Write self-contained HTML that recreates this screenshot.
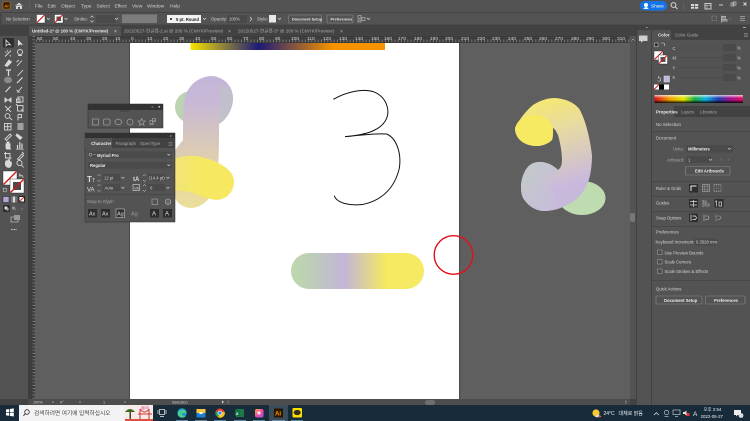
<!DOCTYPE html>
<html><head><meta charset="utf-8"><style>
html,body{margin:0;padding:0;width:750px;height:421px;overflow:hidden;background:#535353}
svg{display:block;filter:blur(.3px)}
text{font-family:"Liberation Sans","Noto Sans CJK KR",sans-serif;font-size:4.8px;fill:#d4d4d4}
.b{font-weight:bold;fill:#e8e8e8}
.d{fill:#a8a8a8}
.i{fill:none;stroke:#d8d8d8;stroke-width:.9}
.f{fill:#d8d8d8}
.ib{fill:#2e2e2e}
.btn{fill:#535353;stroke:#8a8a8a;stroke-width:.6}
</style></head><body>
<svg xmlns="http://www.w3.org/2000/svg" width="750" height="421" viewBox="0 0 750 421">
<defs>
<pattern id="rx" width="3.2" height="7" patternUnits="userSpaceOnUse"><rect width="3.2" height="7" fill="#3d3d3d"/><rect x="1" y="4.5" width=".7" height="2.5" fill="#8f8f8f"/></pattern>
<pattern id="ry" width="7" height="3.2" patternUnits="userSpaceOnUse"><rect width="7" height="3.2" fill="#3d3d3d"/><rect x="4.5" y="1" width="2.5" height=".7" fill="#8f8f8f"/></pattern>
<linearGradient id="bar"><stop offset="0" stop-color="#f8e400"/><stop offset=".35" stop-color="#1c1a78"/><stop offset=".73" stop-color="#f59300"/><stop offset="1" stop-color="#f59300"/></linearGradient>
<linearGradient id="pill"><stop offset="0" stop-color="#bdd8ae"/><stop offset=".12" stop-color="#bdd0b4"/><stop offset=".4" stop-color="#c3b5d8"/><stop offset=".72" stop-color="#f6ea62"/><stop offset="1" stop-color="#f6ea62"/></linearGradient>
<linearGradient id="lp" x1="0" y1="0" x2="0" y2="1"><stop offset="0" stop-color="#c4b6d9"/><stop offset=".2" stop-color="#c7b8d6"/><stop offset=".65" stop-color="#e0d0ac"/><stop offset="1" stop-color="#ecdf98"/></linearGradient>
<linearGradient id="ly" x1="0" y1="0" x2="1" y2="0"><stop offset="0" stop-color="#f0e37c"/><stop offset=".5" stop-color="#f6e961"/></linearGradient>
<linearGradient id="lg" x1="0" y1="0" x2="1" y2="0"><stop offset="0" stop-color="#bdd6ae"/><stop offset="1" stop-color="#bcc4c6"/></linearGradient>
<linearGradient id="rs" x1=".35" y1="0" x2=".55" y2="1"><stop offset="0" stop-color="#f5e870"/><stop offset=".3" stop-color="#e8dba0"/><stop offset=".8" stop-color="#c9b9dd"/><stop offset="1" stop-color="#c5b9d8"/></linearGradient>
<linearGradient id="rb" x1="0" y1="0" x2="1" y2="1"><stop offset="0" stop-color="#c3cbc8"/><stop offset="1" stop-color="#c8badc"/></linearGradient>
<linearGradient id="spec"><stop offset="0" stop-color="#d8101c"/><stop offset=".17" stop-color="#f0a000"/><stop offset=".33" stop-color="#e8e800"/><stop offset=".45" stop-color="#20b040"/><stop offset=".58" stop-color="#10b0e0"/><stop offset=".72" stop-color="#2040b0"/><stop offset=".85" stop-color="#a01090"/><stop offset="1" stop-color="#e01060"/></linearGradient>
<linearGradient id="specv" x1="0" y1="0" x2="0" y2="1"><stop offset="0" stop-color="#fff" stop-opacity=".75"/><stop offset=".4" stop-color="#fff" stop-opacity="0"/><stop offset=".6" stop-color="#000" stop-opacity="0"/><stop offset="1" stop-color="#000" stop-opacity=".9"/></linearGradient>
<linearGradient id="ph" x1="0" y1="0" x2="1" y2="1"><stop offset="0" stop-color="#ffb13b"/><stop offset=".5" stop-color="#f5479c"/><stop offset="1" stop-color="#8b5cf6"/></linearGradient>
</defs>

<!-- base -->
<rect width="750" height="421" fill="#535353"/>
<!-- title bar / menu -->
<rect x="0" y="12" width="750" height=".7" fill="#3e3e3e"/>
<rect x="3" y="2" width="7" height="7" rx=".8" fill="#2c1500" stroke="#d67a10" stroke-width=".6"/>
<text x="4.2" y="7.4" style="font-size:4.4px;fill:#ff9a00;font-weight:bold">Ai</text>
<path d="M15 6 L19 2.6 L23 6 M16 5.5 V9 H18 V7 H20 V9 H22 V5.5" fill="#d8d8d8"/>
<rect x="29" y="2" width=".6" height="8" fill="#6a6a6a"/>
<text x="35" y="7.4">File</text><text x="47.5" y="7.4">Edit</text><text x="61" y="7.4">Object</text><text x="81" y="7.4">Type</text><text x="96.5" y="7.4">Select</text><text x="114.5" y="7.4">Effect</text><text x="132" y="7.4">View</text><text x="147" y="7.4">Window</text><text x="170" y="7.4">Help</text>
<rect x="640" y="1" width="27" height="9.5" rx="4.7" fill="#1473e6"/>
<circle cx="646" cy="5" r="2" fill="#fff"/><path d="M643.5 9 C644 6.5 648 6.5 648.5 9Z" fill="#fff"/>
<text x="651" y="7.6" style="fill:#fff">Share</text>
<circle cx="673.5" cy="5" r="2.4" class="i" style="stroke-width:1"/><path d="M675.3 6.8 L677.5 9" class="i" style="stroke-width:1"/>
<rect x="683" y="2" width=".6" height="8" fill="#6a6a6a"/>
<path d="M691 4h3.2v2h-3.2zM691 6.7h3.2v2h-3.2zM695 4h3.2v2h-3.2zM695 6.7h3.2v2h-3.2z" fill="#d8d8d8"/>
<rect x="705" y="3.5" width="6" height="5.5" class="i"/><path d="M705 5.2h6M707 5.2v3.8" class="i" style="stroke-width:.5"/>
<path d="M719 5h4" class="i"/><rect x="731" y="3" width="3" height="3" class="i" style="stroke-width:.6"/><rect x="733" y="2" width="3" height="3" class="i" style="stroke-width:.6"/>
<path d="M743.5 2.5l3 3m0-3l-3 3" class="i"/>

<!-- control bar -->
<rect x="0" y="13" width="750" height="12" fill="#535353"/>
<rect x="0" y="24.7" width="750" height=".6" fill="#3e3e3e"/>
<rect x="0" y="13" width="1.5" height="12" fill="#444"/>
<text x="6" y="20.6" style="font-size:4.2px">No Selection</text>
<rect x="36.5" y="14.5" width="8.5" height="8.5" fill="#fff" stroke="#222" stroke-width=".4"/><path d="M37 22.5 L44.5 15" stroke="#d01818" stroke-width="1.2"/>
<path d="M46.8 18 l1.5 1.5 1.5-1.5" class="i" style="stroke-width:.7"/>
<rect x="54.5" y="14.5" width="8.5" height="8.5" fill="#fff" stroke="#222" stroke-width=".4"/><rect x="56.5" y="16.5" width="4.5" height="4.5" fill="#535353"/><path d="M55 22.5 L62.5 15" stroke="#d01818" stroke-width="1.2"/>
<path d="M64.5 18 l1.5 1.5 1.5-1.5" class="i" style="stroke-width:.7"/>
<text x="74" y="20.6" style="font-size:4.4px">Stroke:</text>
<path d="M90.5 17.5l1.5-1.7 1.5 1.7M90.5 20.5l1.5 1.7 1.5-1.7" class="i" style="stroke-width:.6"/>
<rect x="96" y="15" width="20" height="8" fill="#4a4a4a"/>
<path d="M115 18 l1.5 1.5 1.5-1.5" class="i" style="stroke-width:.7"/>
<rect x="122" y="14.5" width="35" height="8.5" fill="#7d7d7d"/>
<rect x="167" y="15" width="34" height="8" fill="#f2f2f2"/>
<circle cx="171" cy="19" r="1" fill="#111"/>
<text x="176" y="20.8" style="font-size:4.2px;fill:#222;font-weight:bold">5 pt. Round</text>
<path d="M203 18 l1.5 1.5 1.5-1.5" class="i" style="stroke-width:.7"/>
<text x="211" y="20.6" style="font-size:4.4px">Opacity:</text>
<rect x="227" y="15" width="20" height="8" fill="#4a4a4a"/>
<text x="229" y="20.6" style="font-size:4.2px">100%</text>
<path d="M250 17l1.8 2-1.8 2" class="i" style="stroke-width:.7"/>
<text x="257" y="20.6" style="font-size:4.4px">Style:</text>
<rect x="269" y="15" width="7" height="7.5" fill="#e8e8e8"/>
<path d="M278 18 l1.5 1.5 1.5-1.5" class="i" style="stroke-width:.7"/>
<rect x="288.5" y="15" width="33" height="8" rx="1" class="btn"/><text x="292" y="20.6" style="font-size:3.8px" class="b">Document Setup</text>
<rect x="327" y="15" width="26" height="8" rx="1" class="btn"/><text x="330.5" y="20.6" style="font-size:3.8px" class="b">Preferences</text>
<path d="M358 15.5h3v3h-3zM362 17.5h3v3h-3zM358 20h3v2h-3z" fill="none" stroke="#ccc" stroke-width=".6"/>
<path d="M367 18 l1.5 1.5 1.5-1.5" class="i" style="stroke-width:.7"/>
<rect x="712" y="16" width="4.5" height="4.5" fill="none" stroke="#aaa" stroke-width=".5" stroke-dasharray="1 .7"/>
<path d="M721.5 15.5v7M722.5 16.5h3v1.5h-3zM722.5 19.5h4.5v1.5h-4.5z" fill="none" stroke="#ccc" stroke-width=".7"/>
<path d="M729 18l1.2 1.2 1.2-1.2" stroke="#888" stroke-width=".5" fill="none"/>
<path d="M740 16.5h5M740 18.5h5M740 20.5h5" stroke="#aaa" stroke-width=".8"/>

<!-- tabs -->
<rect x="0" y="25" width="750" height="12" fill="#424242"/>
<rect x="29" y="26" width="92" height="10" fill="#535353"/>
<text x="32" y="32.5" style="font-size:4.4px" class="b">Untitled-1* @ 100 % (CMYK/Preview)</text>
<text x="114" y="32.8" style="font-size:5px;fill:#ddd">×</text>
<text x="124" y="32.5" class="d" style="font-size:4.6px">20220527-한글캡-2.ai @ 200 % (CMYK/Preview)</text>
<text x="228" y="32.8" style="font-size:5px;fill:#bbb">×</text>
<text x="238" y="32.5" class="d" style="font-size:4.6px">20220527-한글캡-3* @ 200 % (CMYK/Preview)</text>
<text x="340" y="32.8" style="font-size:5px;fill:#bbb">×</text>

<!-- rulers -->
<rect x="28" y="36" width="601" height="7" fill="url(#rx)"/>
<rect x="28" y="36" width="7" height="363" fill="url(#ry)"/>
<g class="d" style="font-size:3.5px">
<text x="37" y="40">60</text><text x="53" y="40">50</text><text x="70" y="40">40</text><text x="86" y="40">30</text><text x="102" y="40">20</text><text x="115" y="40">10</text><text x="131" y="40">0</text><text x="147" y="40">10</text><text x="163" y="40">20</text><text x="179" y="40">30</text><text x="195" y="40">40</text><text x="211" y="40">50</text><text x="227" y="40">60</text><text x="243" y="40">70</text><text x="259" y="40">80</text><text x="275" y="40">90</text><text x="291" y="40">100</text><text x="307" y="40">110</text><text x="323" y="40">120</text><text x="339" y="40">130</text><text x="355" y="40">140</text><text x="371" y="40">150</text><text x="384" y="40">160</text><text x="398" y="40">170</text><text x="414" y="40">180</text><text x="430" y="40">190</text><text x="445" y="40">200</text><text x="461" y="40">210</text><text x="477" y="40">220</text><text x="492" y="40">230</text><text x="508" y="40">240</text><text x="524" y="40">250</text><text x="539" y="40">260</text><text x="555" y="40">270</text><text x="571" y="40">280</text><text x="586" y="40">290</text><text x="602" y="40">300</text><text x="617" y="40">310</text>
</g>

<!-- canvas -->
<rect x="35" y="43" width="595" height="356" fill="#5f5f5f"/>
<rect x="130" y="43" width="329" height="356" fill="#fff"/>
<rect x="459" y="43" width="1.2" height="356" fill="#4b4b4b"/>
<rect x="129" y="43" width="1" height="356" fill="#4b4b4b"/>
<rect x="190.5" y="43" width="194.5" height="7" fill="url(#bar)"/>

<!-- left art -->
<circle cx="191" cy="107" r="16" fill="url(#lg)"/>
<path d="M183 140 C183 120 183 108 185 97 C189 84 200 76 212 76 C225 77 233 87 233 98 C233 110 226 120 219 124 C219 140 219 155 218 167 C216 182 214 192 210 197 C204 205 197 208 190 208 C182 207 176 202 175 197 L175 150Z" fill="url(#lp)"/>
<path d="M218 84 C228 88 233 92 233 98 C233 110 226 120 219 124 C220 110 222 95 218 84Z" fill="#bfc2c8" opacity=".75"/>
<path d="M170 160 C178 157 187 155 195 156 C205 157 215 161 222 165 C230 170 234 175 234 182 C234 193 225 200 216 200 C208 199 198 195 190 192 C184 191 176 190 170 192Z" fill="url(#ly)"/>

<!-- 3 -->
<g transform="translate(170 40) scale(.3333)"><path d="M490 178 C530 155 580 145 610 155 C650 170 660 210 650 235 C635 270 590 285 525 290 C570 285 620 280 650 282 C680 295 695 340 688 385 C675 440 640 480 580 493 C540 498 500 490 493 467" fill="none" stroke="#111" stroke-width="3"/></g>

<!-- pill -->
<rect x="291" y="253" width="133" height="36" rx="18" fill="url(#pill)"/>
<circle cx="453.5" cy="255" r="19.3" fill="none" stroke="#e3101a" stroke-width="1.4"/>

<!-- right art -->
<ellipse cx="582" cy="198" rx="23.5" ry="17" fill="#bfdcb0"/>
<path d="M515 128 C520 118 527 110 533 105 C541 100 548 98 555 98 C568 99 576 104 580 110 C587 124 590 140 592 155 C592 168 590 178 587 185 C581 197 574 202 567 205 C558 210 550 211 543 211 C533 210 527 204 523 198 C521 193 521 189 521 185 C522 175 526 168 530 165 C534 162 538 162 542 162 C549 163 554 166 558 170 C561 168 562 164 562 160 C562 152 560 142 558 135 C556 131 555 129 553 128 C553 133 553 137 552 140 C548 144 542 146 537 146 C530 146 524 144 520 140 C517 137 515 133 515 128Z" fill="url(#rs)"/>
<path d="M521 185 C522 175 526 168 530 165 C534 162 538 162 542 162 C549 163 554 166 558 170 C554 176 548 178 545 180 C552 190 556 200 560 208 C554 210 549 211 543 211 C533 210 527 204 523 198 C521 193 521 189 521 185Z" fill="url(#rb)"/>
<path d="M515 128 C518 119 524 116 533 115 C545 114 551 122 553 128 C553 133 553 137 552 140 C548 144 542 146 537 146 C530 146 524 144 520 140 C517 137 515 133 515 128Z" fill="#f6ea62"/>

<!-- left tools -->
<rect x="0" y="36" width="28" height="363" fill="#535353"/>
<rect x="3" y="38" width="11" height="9.5" rx="1" fill="#2e2e2e"/>
<path d="M6 40 L6 46 L7.7 44.5 L10.5 45 Z" fill="none" stroke="#e8e8e8" stroke-width=".8"/>
<path d="M18 39.5 L18 46 L20 44.5 L23 45 Z" fill="#e0e0e0"/>
<g class="i">
<path d="M5 56.5 L11 50.5 M7 50.5 l1 1 M5 52 l1.5 .5 M10 55 l.5 1.5"/><circle cx="20" cy="52" r="2.5"/><path d="M18 55.5 h4"/>
<path d="M5 65.5 L9 60 L11.5 62 L7 66.5Z" fill="#d8d8d8"/><path d="M17 66 L22 60.5 M16.5 62 L19 60"/>
<path d="M6 70h5M8.5 70v6" style="stroke-width:1.3"/><path d="M17.5 76 L23 70"/>
<ellipse cx="8" cy="80" rx="3.6" ry="2.8" fill="#8a8a8a" stroke="#8a8a8a"/><path d="M17 83 L22.5 77.5" style="stroke-width:1.2"/>
<path d="M5.5 92 L10.5 86.5"  style="stroke-width:1.2"/><path d="M17.5 92.5 L22 87 M16.5 90l3 2.5"/>
<path d="M5 98l2.5 2-2.5 2zM11 98l-2.5 2 2.5 2z" fill="#d8d8d8"/><rect x="18" y="97" width="5" height="5"/><rect x="16.5" y="99" width="3.5" height="3.5"/>
<path d="M5 106 l3 3 3-3 M6 111 l2-2 3 3" /><rect x="17.5" y="105.5" width="5.5" height="5.5"/><path d="M16 104l2 2M23.5 111.5l-2-2"/>
<circle cx="7.5" cy="116" r="2.4"/><path d="M10 118l2 2"/><path d="M18 114.5v6M18 114.5h3.5v3.2h-3.5"/>
<rect x="4.5" y="123.5" width="6.5" height="6.5"/><path d="M7.7 123.5v6.5M4.5 126.7h6.5"/><rect x="17.5" y="123" width="6" height="7" fill="#a0a0a0" stroke="none"/>
<path d="M5 139 L10 134 l1.5 1.5 L6.5 140.5 Z"/><path d="M17 134l5 3.5-2 2-4-4z" fill="#d8d8d8"/>
<path d="M6 148v-4h4v4zM7 144v-2h2v2M11 149h-5" fill="#d8d8d8"/><path d="M17.5 149v-4M19.8 149v-7M22 149v-5.5" style="stroke-width:1.2"/><path d="M16 149.5h8" style="stroke-width:.5"/>
<path d="M5.5 152v6h6M4 153.5h6v6"/><path d="M17.5 159 l4.5-5 1.5 1.5-4.5 4.5z M22 152l2 2"/>
<path d="M5.5 165 C5 160 7 160 7.5 162 L8 160 C9 159 10 160 9.7 162 C11 161.5 12 162 11.2 165 C10.5 168 7 168.5 5.5 165Z" fill="#d8d8d8"/><circle cx="19.5" cy="163" r="2.6"/><path d="M21.5 165l2 2.4"/>
</g>
<rect x="3" y="171" width="14" height="14" fill="#fff" stroke="#222" stroke-width=".4"/>
<path d="M3.5 184.5 L16.5 171.5" stroke="#d01818" stroke-width="1.3"/>
<rect x="10" y="179" width="14" height="14" fill="#fff" stroke="#222" stroke-width=".4"/>
<rect x="13" y="182" width="8" height="8" fill="#4a4a4a"/>
<path d="M10.5 192.5 L23.5 179.5" stroke="#d01818" stroke-width="1.3"/>
<path d="M20 175 a2.5 2.5 0 0 1 3 3 M19.5 173.5v2.5h2" class="i" style="stroke-width:.7"/>
<rect x="3" y="188" width="3.5" height="3.5" fill="#e8e8e8"/><circle cx="5" cy="190" r="2" fill="#555" stroke="#ddd" stroke-width=".5"/>
<rect x="3" y="196.5" width="6" height="6" fill="#b3a5d8" stroke="#222" stroke-width=".5"/>
<rect x="11" y="196.5" width="6" height="6" fill="#777"/><rect x="13" y="196.5" width="2" height="6" fill="#ddd"/>
<rect x="18.5" y="196" width="6.5" height="6.5" fill="#222"/><rect x="19.5" y="197" width="4.5" height="4.5" fill="#fff"/><path d="M19.5 201.5L24 197" stroke="#d01818" stroke-width="1"/>
<rect x="3" y="205" width="7" height="7" rx="1" fill="#2e2e2e"/><circle cx="6" cy="208" r="1.6" fill="#ddd"/><circle cx="7.5" cy="209.3" r="1.3" fill="#aaa"/>
<circle cx="13.5" cy="208" r="1.5" fill="#999"/><circle cx="15" cy="209.3" r="1.2" fill="#777"/>
<circle cx="22" cy="209" r="1.4" fill="#666"/>
<rect x="11" y="217" width="7" height="5" fill="none" stroke="#bbb" stroke-width=".7"/><rect x="14" y="215" width="6" height="5" fill="#999"/>
<path d="M11 229.5h6" stroke="#ccc" stroke-width=".9" stroke-dasharray="1 .5"/>

<!-- floating tool panel -->
<rect x="88" y="104" width="75" height="24" fill="#535353" stroke="#2c2c2c" stroke-width=".5"/>
<rect x="88" y="104" width="75" height="6" fill="#323232"/>
<path d="M151.5 107h2" stroke="#ccc" stroke-width=".6"/><path d="M158.5 106l1.5 1.5m0-1.5l-1.5 1.5" stroke="#ddd" stroke-width=".6"/>
<path d="M120 111h9" stroke="#3a3a3a" stroke-width=".8"/>
<g fill="none" stroke="#999" stroke-width=".8">
<rect x="92.5" y="119" width="6" height="6"/><rect x="103.5" y="119" width="6.5" height="6" rx="1.5"/><ellipse cx="118.3" cy="122" rx="3.4" ry="2.8"/><circle cx="130" cy="122" r="3"/><path d="M141.7 118.5l1 2.4 2.6.2-2 1.6.7 2.5-2.3-1.4-2.3 1.4.7-2.5-2-1.6 2.6-.2z"/><path d="M151 124.5l5-5M150 120.5h3v4h-3zM152.5 118.5h3v3h-3z"/>
</g>

<!-- character panel -->
<rect x="85" y="133" width="90" height="89" fill="#535353" stroke="#2c2c2c" stroke-width=".5"/>
<rect x="85" y="133" width="90" height="5" fill="#323232"/>
<rect x="85" y="138" width="90" height="10" fill="#424242"/>
<rect x="85" y="138" width="27" height="10" fill="#535353"/>
<path d="M170 135.5l1.3 1.3m0-1.3l-1.3 1.3" stroke="#ddd" stroke-width=".5"/>
<text x="91" y="144.8" style="font-size:4.4px" class="b">Character</text>
<text x="115.5" y="144.8" style="font-size:4.4px" class="d">Paragraph</text>
<text x="140" y="144.8" style="font-size:4.4px" class="d">OpenType</text>
<path d="M168.5 142.5h4M168.5 144h4M168.5 145.5h4" stroke="#999" stroke-width=".5"/>
<rect x="88" y="151.5" width="84" height="6.5" fill="#4a4a4a"/>
<circle cx="90.5" cy="154.7" r="1.5" class="i" style="stroke-width:.5"/><path d="M93.5 154l1 1 1-1" class="i" style="stroke-width:.5"/>
<text x="97" y="156.8" style="font-size:4.2px" class="b">Myriad Pro</text>
<path d="M167.5 154l1.3 1.3 1.3-1.3" class="i" style="stroke-width:.6"/>
<rect x="88" y="162" width="84" height="6.5" fill="#4a4a4a"/>
<text x="90" y="167.2" style="font-size:4.2px" class="b">Regular</text>
<path d="M167.5 164.5l1.3 1.3 1.3-1.3" class="i" style="stroke-width:.6"/>
<text x="87" y="182" style="font-size:8px;font-weight:bold;fill:#ddd">T</text><text x="92" y="182" style="font-size:5px;fill:#ddd">T</text>
<path d="M97.5 176l1.5-1.5 1.5 1.5M97.5 180l1.5 1.5 1.5-1.5" class="i" style="stroke-width:.5"/>
<rect x="103" y="174" width="17" height="7" fill="#4a4a4a"/><text x="104" y="179.6" style="font-size:4.2px">12 pt</text>
<path d="M121.5 177l1.4 1.4 1.4-1.4" class="i" style="stroke-width:.6"/>
<text x="133" y="181" style="font-size:6px;fill:#ddd;font-weight:bold">tA</text>
<path d="M143 176l1.5-1.5 1.5 1.5M143 180l1.5 1.5 1.5-1.5" class="i" style="stroke-width:.5"/>
<rect x="148" y="174" width="17" height="7" fill="#4a4a4a"/><text x="149" y="179.6" style="font-size:4.2px">(14.4 pt)</text>
<path d="M166.5 177l1.4 1.4 1.4-1.4" class="i" style="stroke-width:.6"/>
<text x="87" y="191.5" style="font-size:6px;fill:#ddd">VA</text>
<path d="M97.5 186l1.5-1.5 1.5 1.5M97.5 190l1.5 1.5 1.5-1.5" class="i" style="stroke-width:.5"/>
<rect x="103" y="184" width="17" height="7" fill="#4a4a4a"/><text x="104.5" y="189.6" style="font-size:4.2px">Auto</text>
<path d="M121.5 187l1.4 1.4 1.4-1.4" class="i" style="stroke-width:.6"/>
<rect x="133" y="184.5" width="6.5" height="6" class="i" style="stroke-width:.6"/><text x="134" y="189.5" style="font-size:4px">VA</text>
<path d="M143 186l1.5-1.5 1.5 1.5M143 190l1.5 1.5 1.5-1.5" class="i" style="stroke-width:.5"/>
<rect x="148" y="184" width="17" height="7" fill="#4a4a4a"/><text x="150" y="189.6" style="font-size:4.2px">0</text>
<path d="M166.5 187l1.4 1.4 1.4-1.4" class="i" style="stroke-width:.6"/>
<rect x="85" y="194" width="90" height=".5" fill="#3c3c3c"/>
<text x="87" y="203" style="font-size:4.2px" class="d">Snap to Glyph</text>
<rect x="152" y="199" width="5.5" height="5.5" class="i" style="stroke:#aaa;stroke-width:.6"/><circle cx="168" cy="201.7" r="2.7" class="i" style="stroke:#ccc;stroke-width:.6"/><path d="M168 200.5v2.6" stroke="#ccc" stroke-width=".6"/>
<rect x="88" y="209" width="9" height="8.5" fill="#2e2e2e"/><text x="89" y="215.5" style="font-size:5.5px;fill:#ddd">Ax</text>
<rect x="101" y="209" width="9" height="8.5" fill="#2e2e2e"/><text x="102" y="215.5" style="font-size:5.5px;fill:#ddd">Ax</text>
<rect x="116" y="209" width="8.5" height="8.5" fill="#2e2e2e" stroke="#ddd" stroke-width=".5"/><text x="117" y="215.5" style="font-size:5.5px;fill:#ddd">Ag</text>
<text x="131" y="215.5" style="font-size:5.5px;fill:#999">Ag</text>
<rect x="150" y="209" width="9" height="8.5" fill="#2e2e2e"/><text x="152" y="215.5" style="font-size:6px;fill:#ddd">A</text>
<rect x="163" y="209" width="9" height="8.5" fill="#2e2e2e"/><text x="165" y="215.5" style="font-size:6px;fill:#ddd">A</text>

<!-- right scroll + strip -->
<rect x="630" y="36" width="6" height="363" fill="#535353"/>
<path d="M631.5 40.5l1.5-1.5 1.5 1.5" class="i" style="stroke-width:.5"/>
<rect x="630" y="213" width="5" height="9" rx="2" fill="#777"/>
<rect x="636" y="25" width=".8" height="380" fill="#3e3e3e"/>
<rect x="637" y="30" width="14" height="375" fill="#535353"/>
<rect x="651" y="25" width=".8" height="380" fill="#3e3e3e"/>
<path d="M639 35.5h8.5v5.5h-4.5l-2 1.8v-1.8h-2z" fill="#cfcfcf"/>
<rect x="637" y="29.6" width="14" height=".5" fill="#3e3e3e"/>
<rect x="637" y="25" width="113" height="5" fill="#424242"/>
<path d="M646 27.5l1.5 0M743 27.5h3" stroke="#ccc" stroke-width=".7"/>

<!-- color panel -->
<rect x="652" y="30" width="98" height="10" fill="#424242"/>
<rect x="652" y="30" width="19" height="10" fill="#535353"/>
<text x="658" y="36.5" style="font-size:4.4px" class="b">Color</text>
<text x="675" y="36.5" style="font-size:4.4px" class="d">Color Guide</text>
<path d="M744 33.5h4M744 35h4M744 36.5h4" stroke="#aaa" stroke-width=".5"/>
<rect x="654.5" y="43" width="3.5" height="3.5" fill="#222" stroke="#ddd" stroke-width=".5"/>
<path d="M661 43 h2.5 a1 1 0 0 1 1 1 v2" class="i" style="stroke-width:.6"/>
<rect x="654" y="51" width="9" height="9" fill="#fff" stroke="#222" stroke-width=".4"/><path d="M654.5 59.5L662.5 51.5" stroke="#d01818" stroke-width="1.1"/>
<rect x="658.5" y="55" width="9" height="9" fill="#fff" stroke="#222" stroke-width=".4"/><rect x="660.5" y="57" width="5" height="5" fill="#555"/><path d="M659 63.5L667 55.5" stroke="#d01818" stroke-width="1.1"/>
<text x="672.5" y="50" style="font-size:4.2px">C</text><text x="672.5" y="59.5" style="font-size:4.2px">M</text><text x="672.5" y="69.5" style="font-size:4.2px">Y</text><text x="672.5" y="79" style="font-size:4.2px">K</text>
<g fill="#4d4d4d"><rect x="679" y="47.5" width="44" height="1"/><rect x="679" y="57" width="44" height="1"/><rect x="679" y="67" width="44" height="1"/><rect x="679" y="77" width="44" height="1"/></g>
<g fill="#4a4a4a"><rect x="723" y="44" width="13" height="7"/><rect x="723" y="54" width="13" height="7"/><rect x="723" y="64" width="13" height="7"/><rect x="723" y="74" width="13" height="7"/></g>
<text x="737" y="49.5" style="font-size:4.2px">%</text><text x="737" y="59.5" style="font-size:4.2px">%</text><text x="737" y="69.5" style="font-size:4.2px">%</text><text x="737" y="79.5" style="font-size:4.2px">%</text>
<path d="M658 78h2.5v3h-3M658.5 76v2" class="i" style="stroke-width:.6"/>
<rect x="664" y="76" width="5.5" height="6" fill="#c3b5d8" stroke="#ddd" stroke-width=".5"/>
<rect x="654" y="84.5" width="5" height="5" fill="#fff"/><path d="M654 89.5L659 84.5" stroke="#d01818" stroke-width="1"/>
<rect x="659" y="84.5" width="5" height="5" fill="#000"/><rect x="664" y="84.5" width="5" height="5" fill="#fff"/>
<rect x="654.5" y="95" width="88.5" height="8" fill="url(#spec)"/>
<rect x="654.5" y="95" width="88.5" height="8" fill="url(#specv)"/>

<!-- properties panel -->
<rect x="652" y="106" width="98" height="11" fill="#424242"/>
<rect x="652" y="106" width="22" height="11" fill="#535353"/>
<text x="656" y="113.5" style="font-size:4.4px" class="b">Properties</text>
<text x="681" y="113.5" style="font-size:4.4px" class="d">Layers</text>
<text x="700" y="113.5" style="font-size:4.4px" class="d">Libraries</text>
<text x="656" y="126" style="font-size:4.4px">No Selection</text>
<rect x="652" y="131" width="98" height=".5" fill="#3e3e3e"/>
<text x="656" y="139.6" style="font-size:4.4px">Document</text>
<text x="673" y="150.6" style="font-size:4.2px" class="d">Units:</text>
<rect x="686" y="145" width="47" height="7.5" fill="#4a4a4a"/>
<text x="688" y="150.6" style="font-size:4.2px" class="b">Millimeters</text>
<path d="M728 148l1.4 1.4 1.4-1.4" class="i" style="stroke-width:.6"/>
<text x="667" y="161.3" style="font-size:4.2px" class="d">Artboard:</text>
<rect x="686" y="156" width="25" height="7" fill="#4a4a4a"/><text x="688" y="161.3" style="font-size:4.2px">1</text>
<path d="M709 159l1.4 1.4 1.4-1.4" class="i" style="stroke-width:.6"/>
<path d="M722 158.5l-1.2 1.2 1.2 1.2M728 158.5l1.2 1.2-1.2 1.2" stroke="#888" stroke-width=".5" fill="none"/>
<rect x="685.5" y="166.5" width="44.5" height="8.5" rx=".8" class="btn"/>
<text x="695" y="172.5" style="font-size:4.2px" class="b">Edit Artboards</text>
<rect x="652" y="181" width="98" height=".5" fill="#3e3e3e"/>
<text x="656" y="190" style="font-size:4.2px">Ruler &amp; Grids</text>
<rect x="689" y="184" width="9" height="8.5" fill="#2e2e2e"/><path d="M691 191v-5h5.5" fill="none" stroke="#eee" stroke-width="1"/>
<rect x="702.5" y="184.5" width="7" height="7" fill="none" stroke="#aaa" stroke-width=".6"/><path d="M704.8 184.5v7M707.2 184.5v7M702.5 186.8h7M702.5 189.2h7" stroke="#aaa" stroke-width=".4"/>
<rect x="714" y="184.5" width="7" height="7" fill="none" stroke="#aaa" stroke-width=".7" stroke-dasharray="1 .8"/><path d="M716.3 184.5v7M718.7 184.5v7" stroke="#aaa" stroke-width=".4" stroke-dasharray="1 .8"/>
<rect x="652" y="196" width="98" height=".5" fill="#3e3e3e"/>
<text x="656" y="204.6" style="font-size:4.2px">Guides</text>
<rect x="689" y="199" width="9" height="8.5" fill="#2e2e2e"/><path d="M690 201.5h7M690 205h7M693.5 200v7" stroke="#ddd" stroke-width=".7"/>
<path d="M703 201h3v2h-3zM705 204h4v2h-4zM703 200v7" fill="none" stroke="#bbb" stroke-width=".6"/>
<rect x="714.5" y="199" width="9" height="8.5" fill="#2e2e2e"/><path d="M716.5 200.5v6M716.5 200.5l-1 1.5M719 202v4h2.5v-4z" fill="none" stroke="#ddd" stroke-width=".7"/>
<rect x="652" y="211" width="98" height=".5" fill="#3e3e3e"/>
<text x="656" y="219.4" style="font-size:4.2px">Snap Options</text>
<rect x="689" y="213.5" width="9" height="8.5" fill="#2e2e2e"/><path d="M691 214.5v6.5M692.5 216h3l1 1.7-1 1.7h-3" fill="none" stroke="#eee" stroke-width=".7"/>
<path d="M704 214.5v6.5M705 216h3l1 1.7-1 1.7h-3" fill="none" stroke="#bbb" stroke-width=".6"/>
<path d="M716 214.5v6.5M717 216h3l1 1.7-1 1.7h-3" fill="none" stroke="#bbb" stroke-width=".6" stroke-dasharray="1 .4"/>
<rect x="652" y="226" width="98" height=".5" fill="#3e3e3e"/>
<text x="656" y="233.3" style="font-size:4.2px">Preferences</text>
<text x="655.5" y="243.3" style="font-size:4.2px">Keyboard Increment:</text>
<rect x="694.5" y="238.5" width="22" height="7" fill="#4a4a4a"/>
<text x="696" y="243.4" style="font-size:4.2px">0.3528 mm</text>
<g fill="#4a4a4a" stroke="#aaa" stroke-width=".5">
<rect x="657.5" y="250" width="4.5" height="4.5"/><rect x="657.5" y="259.5" width="4.5" height="4.5"/><rect x="657.5" y="269" width="4.5" height="4.5"/></g>
<text x="664.5" y="254.3" style="font-size:4.2px">Use Preview Bounds</text>
<text x="664.5" y="263.6" style="font-size:4.2px">Scale Corners</text>
<text x="664.5" y="273" style="font-size:4.2px">Scale Strokes &amp; Effects</text>
<rect x="652" y="280" width="98" height=".5" fill="#3e3e3e"/>
<text x="656" y="290.6" style="font-size:4.2px">Quick Actions</text>
<rect x="656" y="296" width="46" height="8" rx=".8" class="btn"/>
<text x="664" y="302" style="font-size:4.2px" class="b">Document Setup</text>
<rect x="705.5" y="296" width="39.5" height="8" rx=".8" class="btn"/>
<text x="714" y="302" style="font-size:4.2px" class="b">Preferences</text>

<!-- status bar -->
<rect x="0" y="399" width="636" height="6" fill="#424242"/>
<rect x="28" y="399" width="602" height="6" fill="#4d4d4d"/>
<text x="33" y="403.7" style="font-size:3.8px">100%</text>
<path d="M52 401.5l1 1 1-1M79 401.5l1 1 1-1M124 401.5l1 1 1-1" class="i" style="stroke-width:.5"/>
<text x="60" y="403.7" style="font-size:3.8px">0°</text>
<text x="103" y="403.7" style="font-size:3.8px">1</text>
<text x="172" y="403.7" style="font-size:3.8px">Selection</text>
<path d="M222 400.5l2 1.5-2 1.5z" fill="#ddd"/>
<path d="M229 400.5l-1.5 1.5 1.5 1.5" class="i" style="stroke-width:.4"/>
<rect x="425" y="400" width="10" height="5" rx="2.5" fill="#6f6f6f"/>
<path d="M625 400.5l1.5 1.5-1.5 1.5" class="i" style="stroke-width:.5"/>

<!-- taskbar -->
<rect x="0" y="405" width="750" height="16" fill="#172b3b"/>
<path d="M6 409.5l3-.4v3h-3zM9.8 409l4-.6v3.7h-4zM6 412.8h3v3l-3-.4zM9.8 412.8h4v3.7l-4-.6z" fill="#fff"/>
<rect x="19" y="405" width="134" height="16" fill="#f3f3f3"/>
<circle cx="27" cy="412" r="2.3" fill="none" stroke="#222" stroke-width=".8"/><path d="M25.4 413.7l-2 2.2" stroke="#222" stroke-width=".8"/>
<text x="34" y="415" style="font-size:5.7px;fill:#444">검색하려면 여기에 입력하십시오</text>
<rect x="124" y="405" width="29" height="16" fill="#f5ecea"/>
<path d="M125 412c3-4 7-4 10 0z" fill="#3c6a20"/><rect x="129.5" y="412" width="1.5" height="7" fill="#5a3a20"/>
<path d="M138 414h14M140 409v10M149 409v10M140 409 C143 413 146 413 149 409" fill="none" stroke="#d8302e" stroke-width="1"/>
<circle cx="143" cy="408" r="2" fill="#f0a0c0"/><circle cx="147" cy="407.5" r="1.8" fill="#f0b0d0"/><rect x="125" y="419" width="28" height="2" fill="#e05040"/>
<rect x="159.5" y="409.5" width="5" height="5" fill="none" stroke="#eee" stroke-width=".7"/><path d="M158 410v4M166 410v4M160 416.5h4" stroke="#eee" stroke-width=".7"/>
<circle cx="182" cy="413" r="4.7" fill="#1aa0c8"/><path d="M178 414 C178 409 186 408 186.5 413 H181.5 C181.5 415.5 184 416.5 186 416 C183 419 178 417.5 178 414Z" fill="#4fd08a"/>
<path d="M196.5 409h9v8.5h-9z" fill="#f5c542"/><path d="M196.5 413h9v4.5h-9z" fill="#2080d0"/><rect x="199.5" y="412" width="3" height="2" fill="#fff"/>
<circle cx="220" cy="413" r="4.6" fill="#e33b2e"/><path d="M220 413 L224.5 411.5 A4.6 4.6 0 0 1 218 417.2Z" fill="#f7c414"/><path d="M220 413 L218 417.2 A4.6 4.6 0 0 1 215.8 411 Z" fill="#2ba14b"/><circle cx="220" cy="413" r="2" fill="#3b82f0" stroke="#fff" stroke-width=".7"/>
<rect x="236" y="409" width="8" height="8" rx=".6" fill="#1d7a46"/><rect x="235" y="410" width="5" height="6" fill="#107040"/><text x="236" y="415" style="font-size:4.5px;fill:#fff;font-weight:bold">x</text>
<rect x="255" y="409" width="8.5" height="8.5" rx="2" fill="url(#ph)"/><circle cx="259" cy="413" r="1.6" fill="#fff" opacity=".85"/>
<rect x="269" y="405" width="19" height="16" fill="#3a4d5c"/>
<rect x="274" y="408.5" width="9" height="9" fill="#2c1500"/><text x="275" y="415.5" style="font-size:6px;font-weight:bold;fill:#ff9a00">Ai</text>
<rect x="292.5" y="408" width="9.5" height="9.5" rx="1" fill="#fae100"/><ellipse cx="297.2" cy="412.5" rx="3.5" ry="2.6" fill="#3a2a1a"/>
<g fill="#7fb0d0"><rect x="176" y="420.3" width="12" height=".7"/><rect x="195" y="420.3" width="12" height=".7"/><rect x="214" y="420.3" width="12" height=".7"/><rect x="234" y="420.3" width="12" height=".7"/><rect x="253" y="420.3" width="12" height=".7"/><rect x="272" y="420.3" width="13" height=".7"/><rect x="291" y="420.3" width="12" height=".7"/></g>

<circle cx="596" cy="413" r="3.6" fill="#f6c92c"/><path d="M595 416.5c1-2 5-2 6 0c0 1-6 1-6 0z" fill="#cfe0ee"/><circle cx="599.5" cy="416.5" r="1" fill="#e33"/>
<text x="603.5" y="415" style="font-size:5px;fill:#eee">24°C</text>
<text x="618.5" y="415" style="font-size:5px;fill:#eee">대체로 맑음</text>
<path d="M654 415l2.4-2.4 2.4 2.4" fill="none" stroke="#eee" stroke-width=".7"/>
<circle cx="666.5" cy="412.5" r="2.2" fill="none" stroke="#ddd" stroke-width=".6"/><path d="M664.5 416.5h4" stroke="#ddd" stroke-width=".6"/>
<rect x="673" y="410" width="7" height="4.5" fill="none" stroke="#ddd" stroke-width=".6"/><path d="M675 416.5h3" stroke="#ddd" stroke-width=".6"/>
<path d="M683 412h1.5l2-1.5v5l-2-1.5H683z" fill="#ddd"/><rect x="686.5" y="413" width="3" height="3" fill="#e33"/>
<text x="693" y="416" style="font-size:6.5px;fill:#eee">A</text>
<text x="703.5" y="411.2" style="font-size:4.4px;fill:#eee">오후 2:54</text>
<text x="700.5" y="418" style="font-size:4.4px;fill:#eee">2022-05-27</text>
<path d="M734 410h7v5h-3.5l-1.5 1.5V415h-2z" fill="#eee"/><circle cx="741" cy="415.5" r="2.4" fill="#ddd"/>
</svg>
</body></html>
